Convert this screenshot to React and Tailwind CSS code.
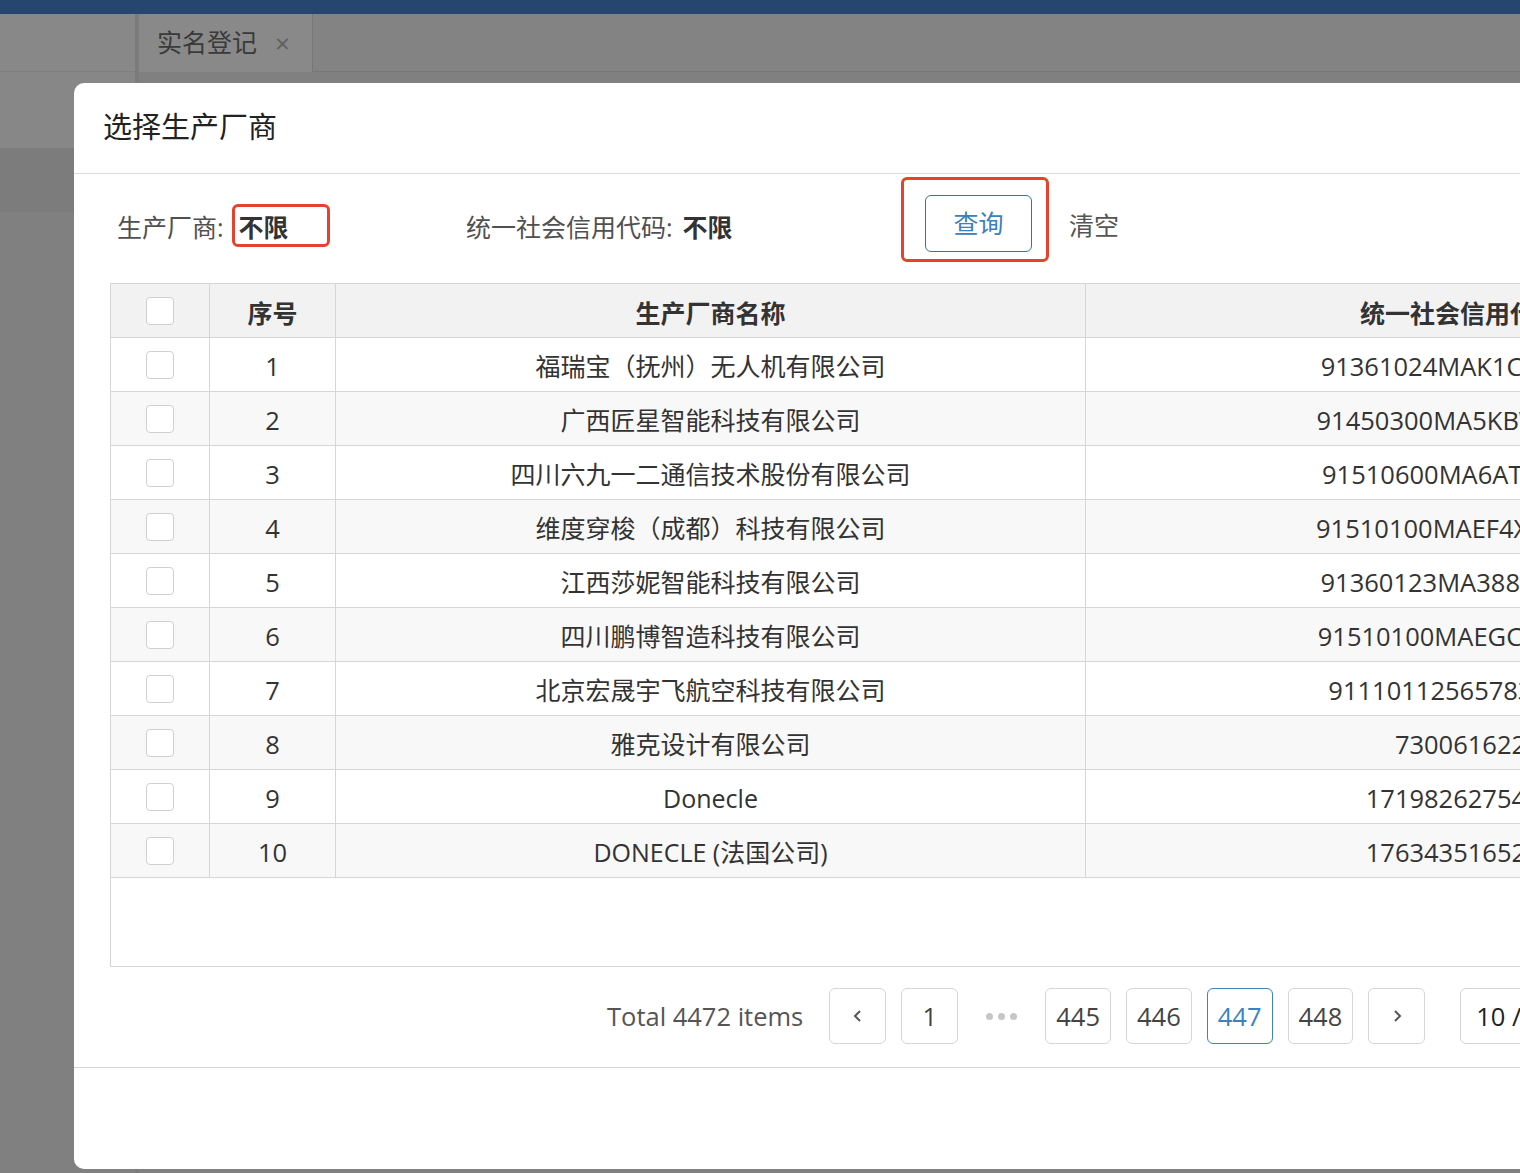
import React from "react";

const rows = [
  { no: 1, name: "福瑞宝（抚州）无人机有限公司", code: "91361024MAK1C8QX5T" },
  { no: 2, name: "广西匠星智能科技有限公司", code: "91450300MA5KBWXY3G" },
  { no: 3, name: "四川六九一二通信技术股份有限公司", code: "91510600MA6AT8E01U" },
  { no: 4, name: "维度穿梭（成都）科技有限公司", code: "91510100MAEF4XKW7M" },
  { no: 5, name: "江西莎妮智能科技有限公司", code: "91360123MA388MLT4K" },
  { no: 6, name: "四川鹏博智造科技有限公司", code: "91510100MAEGC1QK9B" },
  { no: 7, name: "北京宏晟宇飞航空科技有限公司", code: "91110112565783702B" },
  { no: 8, name: "雅克设计有限公司", code: "730061622" },
  { no: 9, name: "Donecle", code: "1719826275488" },
  { no: 10, name: "DONECLE (法国公司)", code: "1763435165237" },
];

function Checkbox() {
  return <span className="block w-[28px] h-[28px] rounded-[4px] border border-[#d0d0d0] bg-white" />;
}

function PageBtn({ children, active }) {
  return (
    <button
      className={
        "h-[56px] min-w-[57px] px-[10px] rounded-[6px] border bg-white flex items-center justify-center text-[25.5px] " +
        (active ? "border-[#3a83bf] text-[#3a83bf]" : "border-[#d6d6d6] text-[#444]")
      }
    >
      {children}
    </button>
  );
}

export default function App() {
  return (
    <div className="relative w-[1520px] h-[1173px] overflow-hidden bg-[#808080] font-['Open_Sans','Noto_Sans_CJK_SC',sans-serif]">
      {/* page behind the mask */}
      <div className="h-[14px] bg-[#24466f]" />
      <div className="flex h-[1159px]">
        <div className="w-[135px] flex flex-col">
          <div className="h-[58px] bg-[#888888] border-b border-[#7e7e7e]" />
          <div className="h-[76px] bg-[#878787]" />
          <div className="h-[64px] bg-[#7c7c7c]" />
          <div className="flex-1 bg-[#808080]" />
        </div>
        <div className="w-[4px] bg-[#7b7b7b]" />
        <div className="flex-1 flex flex-col">
          <div className="h-[58px] flex">
            <div className="w-[174px] bg-[#898989] border-r border-[#777] flex items-center pl-[18px] gap-[18px]">
              <span className="text-[25px] text-[#3a3a3a]">实名登记</span>
              <span className="text-[26px] text-[#5f5f5f] leading-none">×</span>
            </div>
            <div className="flex-1 bg-[#838383] border-b border-[#777]" />
          </div>
          <div className="flex-1 bg-[#808080]" />
        </div>
      </div>

      {/* modal */}
      <div className="absolute left-[74px] top-[83px] w-[1720px] h-[1086px] bg-white rounded-[10px] flex flex-col">
        <div className="h-[91px] border-b border-[#dcdcdc] flex items-center pl-[29px]">
          <span className="text-[29px] text-[#222] -mt-[2px]">选择生产厂商</span>
        </div>

        <div className="h-[109px] flex items-start pl-[43px]">
          <div className="w-[349px] mt-[30px] h-[43px] flex items-center">
            <span className="text-[25px] text-[#505050] pt-[4px]">生产厂商:</span>
            <div className="ml-[8px] w-[98px] h-[43px] border-[3px] border-[#e5432d] rounded-[6px] flex items-center pl-[4px]">
              <span className="text-[25px] font-bold text-[#333] pt-[4px]">不限</span>
            </div>
          </div>
          <div className="w-[435px] mt-[30px] h-[43px] flex items-center pt-[4px]">
            <span className="text-[25px] text-[#505050]">统一社会信用代码:</span>
            <span className="ml-[10px] text-[25px] font-bold text-[#333]">不限</span>
          </div>
          <div className="mt-[3px] w-[148px] h-[85px] border-[3px] border-[#e5432d] rounded-[6px] flex pl-[21px] pt-[15px]">
            <button className="w-[107px] h-[57px] rounded-[6px] border border-[#2f76ad] text-[25px] text-[#3a80ba] bg-white">
              查询
            </button>
          </div>
          <span className="ml-[20px] mt-[33px] text-[25px] text-[#555]">清空</span>
        </div>

        <div className="ml-[36px] w-[1700px] h-[684px] border border-[#d6d6d6] flex flex-col">
          <div className="grid grid-cols-[99px_126px_750px_724px] bg-[#f2f2f2] text-[25px] font-bold text-[#333]">
            <div className="h-[54px] border-r border-b border-[#d6d6d6] flex items-center justify-center">
              <Checkbox />
            </div>
            <div className="h-[54px] border-r border-b border-[#d6d6d6] flex items-center justify-center pt-[7px]">序号</div>
            <div className="h-[54px] border-r border-b border-[#d6d6d6] flex items-center justify-center pt-[7px]">生产厂商名称</div>
            <div className="h-[54px] border-b border-[#d6d6d6] flex items-center pl-[274px] pt-[7px]">统一社会信用代码</div>
          </div>
          {rows.map((r) => (
            <div
              key={r.no}
              className={
                "grid grid-cols-[99px_126px_750px_724px] text-[25px] text-[#333] " +
                (r.no % 2 === 0 ? "bg-[#f8f8f8]" : "bg-white")
              }
            >
              <div className="h-[54px] border-r border-b border-[#d6d6d6] flex items-center justify-center">
                <Checkbox />
              </div>
              <div className="h-[54px] border-r border-b border-[#d6d6d6] flex items-center justify-center pt-[4px] text-[25.5px]">{r.no}</div>
              <div className="h-[54px] border-r border-b border-[#d6d6d6] flex items-center justify-center whitespace-nowrap pt-[4px]">{r.name}</div>
              <div className="h-[54px] border-b border-[#d6d6d6] flex items-center pt-[4px]">
                <span className="w-[749px] shrink-0 text-center whitespace-nowrap text-[25.5px]">{r.code}</span>
              </div>
            </div>
          ))}
        </div>

        <div className="mt-[21px] h-[56px] flex items-center pl-[533px]">
          <span className="text-[25.5px] text-[#555] mr-[26px]">Total 4472 items</span>
          <div className="flex items-center gap-[15px]">
            <PageBtn>
              <svg width="16" height="16" viewBox="0 0 16 16" fill="none" stroke="#555" strokeWidth="2">
                <path d="M10 3 L5 8 L10 13" />
              </svg>
            </PageBtn>
            <PageBtn>1</PageBtn>
            <span className="w-[57px] flex items-center justify-center gap-[5px]">
              <span className="w-[7px] h-[7px] rounded-full bg-[#c6c6c6]" />
              <span className="w-[7px] h-[7px] rounded-full bg-[#c6c6c6]" />
              <span className="w-[7px] h-[7px] rounded-full bg-[#c6c6c6]" />
            </span>
            <PageBtn>445</PageBtn>
            <PageBtn>446</PageBtn>
            <PageBtn active>447</PageBtn>
            <PageBtn>448</PageBtn>
            <PageBtn>
              <svg width="16" height="16" viewBox="0 0 16 16" fill="none" stroke="#555" strokeWidth="2">
                <path d="M6 3 L11 8 L6 13" />
              </svg>
            </PageBtn>
          </div>
          <div className="ml-[35px] h-[56px] w-[200px] rounded-[6px] border border-[#d6d6d6] flex items-center pl-[15px] text-[25.5px] text-[#222]">
            10 / page
          </div>
        </div>

        <div className="mt-[23px] border-b border-[#d6d6d6]" />
        <div className="flex-1" />
      </div>
    </div>
  );
}
